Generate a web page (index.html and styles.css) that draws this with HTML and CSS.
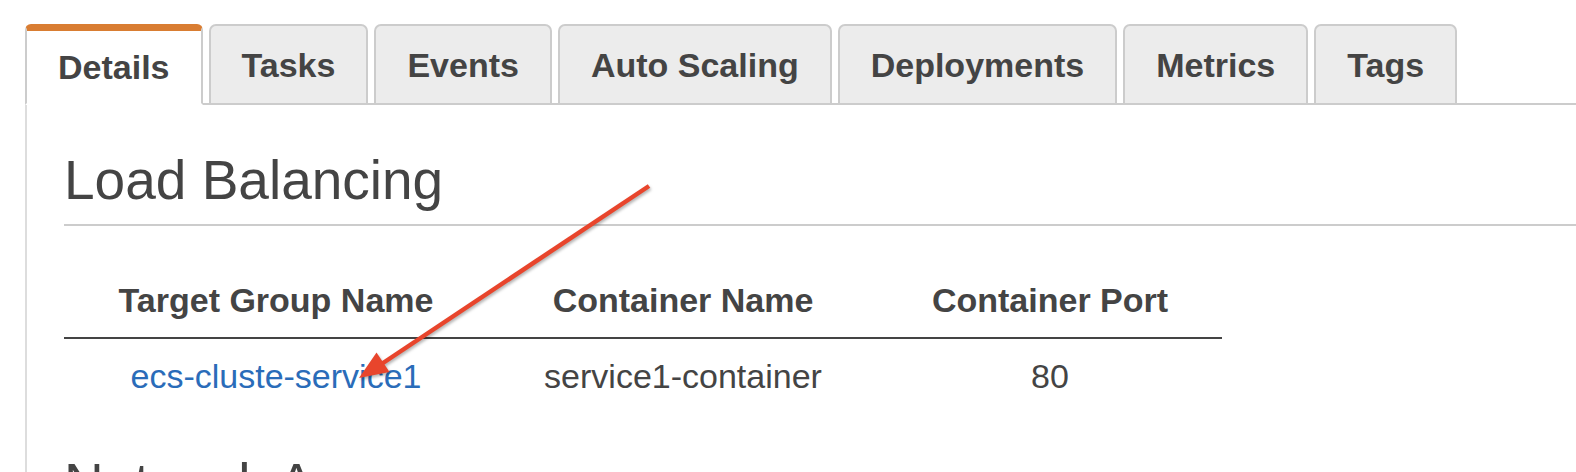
FILE: index.html
```html
<!DOCTYPE html>
<html lang="en">
<head>
<meta charset="utf-8">
<title>Service details</title>
<link rel="stylesheet" href="styles.css">
</head>
<body>
<div class="page">
  <nav class="tabs">
    <div class="tab active">Details</div>
    <div class="tab">Tasks</div>
    <div class="tab">Events</div>
    <div class="tab">Auto Scaling</div>
    <div class="tab">Deployments</div>
    <div class="tab">Metrics</div>
    <div class="tab">Tags</div>
  </nav>
  <section class="panel">
    <h2 class="section-title">Load Balancing</h2>
    <table class="lb-table">
      <thead>
        <tr>
          <th class="col-1">Target Group Name</th>
          <th class="col-2">Container Name</th>
          <th class="col-3">Container Port</th>
        </tr>
      </thead>
      <tbody>
        <tr>
          <td><a class="link" href="#">ecs-cluste-service1</a></td>
          <td>service1-container</td>
          <td>80</td>
        </tr>
      </tbody>
    </table>
    <h2 class="section-title next">Network Access</h2>
  </section>
</div>
<svg class="annotation" width="1576" height="472" viewBox="0 0 1576 472" aria-hidden="true">
  <g class="arrow">
    <line x1="649" y1="186" x2="380" y2="365" stroke="#e8452c" stroke-width="4.5" stroke-linecap="butt"/>
    <polygon points="359,378 389.5,372 376.5,352.5" fill="#e8452c"/>
  </g>
</svg>
</body>
</html>
```

FILE: styles.css
```css
html, body {
  margin: 0;
  padding: 0;
  background: #ffffff;
}

body {
  font-family: "Liberation Sans", Arial, Helvetica, sans-serif;
  color: #444444;
  width: 1576px;
  height: 472px;
  overflow: hidden;
  position: relative;
}

.page {
  padding-top: 24px;
}

.tabs {
  display: flex;
  gap: 6px;
  margin-left: 25px;
  border-bottom: 2px solid #cccccc;
  height: 79px;
}

.tab {
  box-sizing: border-box;
  height: 81px;
  margin-bottom: -2px;
  padding: 2px 31px 0;
  display: flex;
  align-items: center;
  font-size: 34px;
  font-weight: 700;
  color: #444444;
  background: #ececec;
  border: 2px solid #cccccc;
  border-radius: 7px 7px 0 0;
}

.tab.active {
  background: #ffffff;
  border-top: 7px solid #d97d32;
  border-bottom: 2px solid #ffffff;
  border-radius: 6px 6px 0 0;
  padding-top: 0;
}

.panel {
  margin-left: 25px;
  border-left: 2px solid #dddddd;
  padding: 43px 0 40px 37px;
}

.section-title {
  margin: 0;
  font-size: 55px;
  font-weight: 400;
  line-height: 64px;
  color: #444444;
  padding-bottom: 12px;
  border-bottom: 2px solid #cccccc;
}

.section-title.next {
  margin-top: 38px;
}

.lb-table {
  border-collapse: collapse;
  margin-top: 40px;
  table-layout: fixed;
  width: 1158px;
}

.lb-table th,
.lb-table td {
  font-size: 34px;
  line-height: 40px;
  text-align: center;
  padding: 0;
  color: #444444;
}

.lb-table th {
  font-weight: 700;
  padding: 14px 0 17px;
  border-bottom: 2px solid #444444;
}

.lb-table td {
  font-weight: 400;
  padding: 17px 0 17px;
}

.col-1 { width: 424px; }
.col-2 { width: 390px; }
.col-3 { width: 344px; }

.link {
  color: #2a6cb9;
  text-decoration: none;
}

.annotation {
  position: absolute;
  top: 0;
  left: 0;
  pointer-events: none;
}

.arrow {
  filter: drop-shadow(1px 2px 1.5px rgba(0, 0, 0, 0.3));
}
```
